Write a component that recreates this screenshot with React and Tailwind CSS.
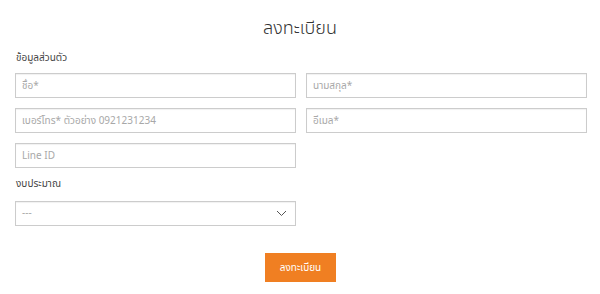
import React from 'react';

const inputCls =
  'w-full h-[25px] border border-[#cccccc] bg-white px-[6px] text-[10px] text-[#555] placeholder:text-[#a8a8a8] outline-none shadow-[inset_0_1px_1px_rgba(0,0,0,0.06)]';

function App() {
  return (
    <div
      className="w-[600px] h-[294px] bg-white text-[#333] overflow-hidden"
      style={{ fontFamily: '"Noto Sans Thai", "Noto Sans", "Liberation Sans", sans-serif' }}
    >
      <h1 className="pt-[15px] text-center text-[18px] leading-[28px] font-light text-[#333]">ลงทะเบียน</h1>

      <div className="px-[15px] pt-[7px]">
        <p className="text-[10px] leading-[16px] text-[#444] pl-[1px]">ข้อมูลส่วนตัว</p>

        {/* personal info */}
        <div className="mt-[7px] grid grid-cols-2 gap-x-[10px] gap-y-[10px] w-[572px]">
          <input className={inputCls} placeholder="ชื่อ*" />
          <input className={inputCls} placeholder="นามสกุล*" />
          <input className={inputCls} placeholder="เบอร์โทร* ตัวอย่าง 0921231234" />
          <input className={inputCls} placeholder="อีเมล*" />
          <input className={inputCls} placeholder="Line ID" />
        </div>

        <p className="mt-[8px] text-[10px] leading-[16px] text-[#444] pl-[1px]">งบประมาณ</p>

        <div className="mt-[9px] w-[281px]">
          <div className="h-[25px] border border-[#cccccc] flex items-center justify-between px-[6px] shadow-[inset_0_1px_1px_rgba(0,0,0,0.06)]">
            <span className="text-[10px] text-[#a8a8a8]">---</span>
            <svg width="11" height="7" viewBox="0 0 11 7" fill="none" className="mr-[2px]">
              <path d="M1 1l4.5 4.5L10 1" stroke="#555" strokeWidth="1" />
            </svg>
          </div>
        </div>

        <div className="mt-[27px] flex justify-center pl-[1px]">
          <button className="w-[71px] h-[29px] bg-[#f07f22] text-white text-[10px] leading-none">
            ลงทะเบียน
          </button>
        </div>
      </div>
    </div>
  );
}

export default App;
